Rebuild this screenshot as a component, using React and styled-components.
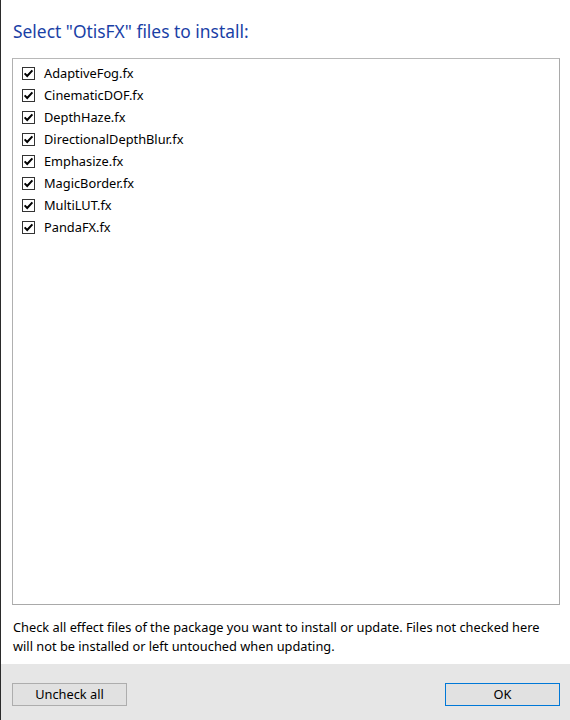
import styled, { createGlobalStyle } from 'styled-components'

const GlobalStyle = createGlobalStyle`
    html, body {
        margin: 0;
        padding: 0;
        background: #ffffff;
    }
    body {
        font-family: "Noto Sans", "Open Sans", sans-serif;
    }
`

const Window = styled.div`
    inline-size: 570px;
    block-size: 720px;
    display: flex;
    flex-direction: column;
    border-left: 1px solid #2b2b2b;
    box-sizing: border-box;
    background: #ffffff;
    overflow: hidden;
`

const Content = styled.main`
    flex: 1;
    display: flex;
    flex-direction: column;
    padding: 19px 10px 0 11px;
    min-block-size: 0;
`

const Title = styled.h1`
    margin: 0 0 15px 1px;
    font-size: 17.4px;
    font-weight: 400;
    color: #1a3fa6;
    line-height: 24px;
`

const ListBox = styled.ul`
    flex: 1;
    margin: 0;
    padding: 3px 0 0 9px;
    list-style: none;
    border: 1px solid #a9a9a9;
    border-top-color: #b8b8b8;
    border-left-color: #b0b0b0;
`

const Item = styled.li`
    display: flex;
    align-items: center;
    gap: 9px;
    block-size: 22px;
    font-size: 12.8px;
    color: #000000;
`

const Box = styled.span`
    inline-size: 13px;
    block-size: 13px;
    box-sizing: border-box;
    border: 1px solid #333333;
    background: #ffffff;
    display: flex;
    align-items: center;
    justify-content: center;
    flex-shrink: 0;
`

const Note = styled.p`
    margin: 13px 0 0 1px;
    max-inline-size: 536px;
    font-size: 12.8px;
    line-height: 19px;
    color: #000000;
    block-size: 40px;
`

const Footer = styled.footer`
    block-size: 56px;
    background: #e6e6e6;
    display: flex;
    align-items: center;
    justify-content: space-between;
    padding: 0 10px 0 11px;
    margin-top: 6px;
`

const Button = styled.button`
    inline-size: 115px;
    block-size: 23px;
    box-sizing: border-box;
    background: #e1e1e1;
    border: 1px solid ${p => (p.$primary ? '#0078d7' : '#adadad')};
    font-family: "Noto Sans", "Open Sans", sans-serif;
    font-size: 12.8px;
    color: #000000;
    padding: 0;
    margin-top: 4px;
`

const files = [
    'AdaptiveFog.fx',
    'CinematicDOF.fx',
    'DepthHaze.fx',
    'DirectionalDepthBlur.fx',
    'Emphasize.fx',
    'MagicBorder.fx',
    'MultiLUT.fx',
    'PandaFX.fx',
]

function Check() {
    return (
        <Box>
            <svg width="11" height="11" viewBox="0 0 11 11">
                <path d="M1.6 5.4 L4.2 8 L9.4 2.4" fill="none" stroke="#000" strokeWidth="2" />
            </svg>
        </Box>
    )
}

export default function App() {
    return (
        <>
            <GlobalStyle />
            <Window>
                <Content>
                    <Title>Select "OtisFX" files to install:</Title>
                    <ListBox>
                        {files.map(f => (
                            <Item key={f}>
                                <Check />
                                <span>{f}</span>
                            </Item>
                        ))}
                    </ListBox>
                    <Note>
                        Check all effect files of the package you want to install or update. Files not checked here
                        will not be installed or left untouched when updating.
                    </Note>
                </Content>
                <Footer>
                    <Button>Uncheck all</Button>
                    <Button $primary>OK</Button>
                </Footer>
            </Window>
        </>
    )
}
